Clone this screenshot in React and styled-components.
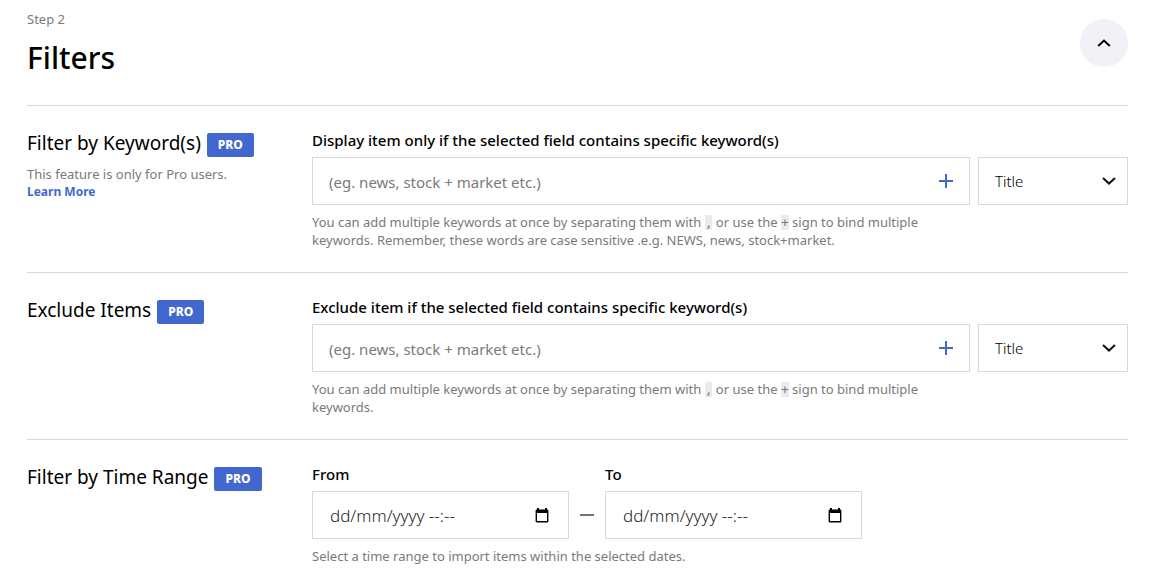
import React, { useId, useState } from "react";
import styled, { createGlobalStyle } from "styled-components";

const GlobalStyle = createGlobalStyle`
  *, *::before, *::after { box-sizing: border-box; }
  body {
    margin: 0;
    background: #fff;
    color: #000;
    font-family: "Noto Sans", "Open Sans", sans-serif;
    font-size: 13px;
    line-height: 18px;
  }
  button, input, select { font: inherit; color: inherit; }
`;

const Page = styled.main`
  padding: 10px 24px 0 27px;
`;

const Header = styled.header`
  display: flex;
  justify-content: space-between;
  align-items: flex-start;
  padding-bottom: 27px;
`;

const Step = styled.p`
  margin: 0;
  color: #7a7a7a;
`;

const PageTitle = styled.h1`
  margin: 10px 0 0;
  font-size: 30px;
  line-height: 40px;
  font-weight: 500;
`;

const CollapseButton = styled.button`
  display: grid;
  place-items: center;
  width: 48px;
  height: 48px;
  margin-top: 9px;
  padding: 0;
  border: 0;
  border-radius: 50%;
  background: #f0f2f7;
  cursor: pointer;
`;

const Section = styled.section`
  display: grid;
  grid-template-columns: 285px minmax(0, 1fr);
  padding: 25px 0 23px;
  border-top: 1px solid #d9d9d9;
`;

const SectionHead = styled.div`
  display: flex;
  align-items: center;
  gap: 6px;
  height: 28px;
`;

const SectionTitle = styled.h2`
  margin: 0;
  padding-bottom: 4px;
  font-size: 19px;
  line-height: 24px;
  font-weight: 450;
  white-space: nowrap;
`;

const Badge = styled.span`
  padding: 0 11px;
  border-radius: 2px;
  background: #4268cf;
  color: #fff;
  font-size: 12px;
  line-height: 24px;
  font-weight: 800;
`;

const ProNote = styled.p`
  margin: 6px 0 0;
  color: #7a7a7a;
`;

const LearnMore = styled.a`
  display: block;
  width: max-content;
  color: #4268cf;
  font-size: 12px;
  font-weight: 700;
  line-height: 18px;
  text-decoration: none;
`;

const Label = styled.label`
  display: block;
  margin-bottom: 8px;
  font-size: 15px;
  line-height: 18px;
  font-weight: 500;
`;

const FieldRow = styled.div`
  display: flex;
  gap: 8px;
`;

const Box = styled.div`
  display: flex;
  align-items: center;
  width: ${(p) => p.$width || "auto"};
  flex: ${(p) => (p.$grow ? "1 1 auto" : "0 0 auto")};
  height: 48px;
  padding-right: ${(p) => p.$end || "16px"};
  border: 1px solid #d9d9d9;
  background: #fff;
`;

const TextInput = styled.input`
  flex: 1;
  min-width: 0;
  height: 46px;
  padding: ${(p) => (p.$date ? "0 0 0 17px" : "2px 0 0 16px")};
  border: 0;
  outline: 0;
  background: transparent;
  font-size: ${(p) => (p.$date ? "17px" : "15px")};
  font-weight: ${(p) => (p.$date ? 300 : 400)};
  &::placeholder {
    color: ${(p) => (p.$date ? "#1f1f1f" : "#7a7a7a")};
    opacity: 1;
  }
`;

const IconButton = styled.button`
  display: grid;
  place-items: center;
  padding: 0;
  border: 0;
  background: transparent;
  color: ${(p) => p.$color};
  cursor: pointer;
`;

const SelectWrap = styled.div`
  display: grid;
  flex: 0 0 150px;
  align-items: center;
  & > * { grid-area: 1 / 1; }
  & > svg {
    justify-self: end;
    margin-right: 12px;
    pointer-events: none;
  }
`;

const Select = styled.select`
  width: 100%;
  height: 48px;
  padding: 0 16px;
  border: 1px solid #d9d9d9;
  border-radius: 0;
  background: #fff;
  appearance: none;
  font-size: 15px;
  font-weight: 300;
`;

const Help = styled.p`
  max-width: 640px;
  margin: 8px 0 0;
  color: #7a7a7a;
`;

const Key = styled.code`
  background: #ebebeb;
  font-family: "DejaVu Sans Mono", monospace;
  font-size: 13px;
  line-height: 14px;
`;

const RangeRow = styled.div`
  display: flex;
  align-items: flex-end;
  gap: 11px;
`;

const Dash = styled.span`
  width: 14px;
  height: 2px;
  margin-bottom: 23px;
  background: #757575;
`;

function Chevron() {
  return (
    <svg width="14" height="8" viewBox="0 0 14 8" fill="none" stroke="#111" strokeWidth="2" aria-hidden="true">
      <path d="M1 1 7 6.6 13 1" />
    </svg>
  );
}

function UpIcon() {
  return (
    <svg width="14" height="8" viewBox="0 0 14 8" fill="none" stroke="currentColor" strokeWidth="2" aria-hidden="true">
      <path d="M1.2 7 7 1.6 12.8 7" />
    </svg>
  );
}

function PlusIcon() {
  return (
    <svg width="14" height="14" viewBox="0 0 14 14" fill="none" stroke="currentColor" strokeWidth="2" aria-hidden="true">
      <path d="M7 0V14M0 7H14" />
    </svg>
  );
}

function CalendarIcon() {
  return (
    <svg width="14" height="15" viewBox="0 0 14 15" aria-hidden="true">
      <path
        fill="#000"
        fillRule="evenodd"
        d="M2 0h2v1.5h6V0h2v1.5h.5A1.2 1.2 0 0 1 13.4 2.7v10.5a1.2 1.2 0 0 1-1.2 1.2H1.8a1.2 1.2 0 0 1-1.2-1.2V2.7A1.2 1.2 0 0 1 1.8 1.5H2zM2 5v8h10V5z"
      />
    </svg>
  );
}

function SectionIntro({ title, children }) {
  return (
    <div>
      <SectionHead>
        <SectionTitle>{title}</SectionTitle>
        <Badge>PRO</Badge>
      </SectionHead>
      {children}
    </div>
  );
}

function KeywordField({ label, extra }) {
  const id = useId();
  return (
    <div>
      <Label htmlFor={id}>{label}</Label>
      <FieldRow>
        <Box $grow>
          <TextInput id={id} placeholder="(eg. news, stock + market etc.)" />
          <IconButton type="button" $color="#4268cf" aria-label="Add keyword">
            <PlusIcon />
          </IconButton>
        </Box>
        <SelectWrap>
          <Select aria-label="Field" defaultValue="Title">
            <option>Title</option>
          </Select>
          <Chevron />
        </SelectWrap>
      </FieldRow>
      <Help>
        You can add multiple keywords at once by separating them with <Key>,</Key> or use the <Key>+</Key> sign to
        bind multiple keywords.{extra}
      </Help>
    </div>
  );
}

function DateField({ label }) {
  const id = useId();
  return (
    <div>
      <Label htmlFor={id}>{label}</Label>
      <Box $width="257px" $end="19px">
        <TextInput id={id} $date placeholder="dd/mm/yyyy --:--" />
        <IconButton type="button" $color="#000" aria-label="Open calendar">
          <CalendarIcon />
        </IconButton>
      </Box>
    </div>
  );
}

export default function App() {
  const [open, setOpen] = useState(true);
  return (
    <>
      <GlobalStyle />
      <Page>
        <Header>
          <div>
            <Step>Step 2</Step>
            <PageTitle>Filters</PageTitle>
          </div>
          <CollapseButton type="button" aria-expanded={open} aria-label="Toggle filters" onClick={() => setOpen(!open)}>
            <UpIcon />
          </CollapseButton>
        </Header>
        {open && (
          <>
            <Section>
              <SectionIntro title="Filter by Keyword(s)">
                <ProNote>This feature is only for Pro users.</ProNote>
                <LearnMore href="#learn-more">Learn More</LearnMore>
              </SectionIntro>
              <KeywordField
                label="Display item only if the selected field contains specific keyword(s)"
                extra=" Remember, these words are case sensitive .e.g. NEWS, news, stock+market."
              />
            </Section>
            <Section>
              <SectionIntro title="Exclude Items" />
              <KeywordField label="Exclude item if the selected field contains specific keyword(s)" />
            </Section>
            <Section>
              <SectionIntro title="Filter by Time Range" />
              <div>
                <RangeRow>
                  <DateField label="From" />
                  <Dash />
                  <DateField label="To" />
                </RangeRow>
                <Help>Select a time range to import items within the selected dates.</Help>
              </div>
            </Section>
          </>
        )}
      </Page>
    </>
  );
}
